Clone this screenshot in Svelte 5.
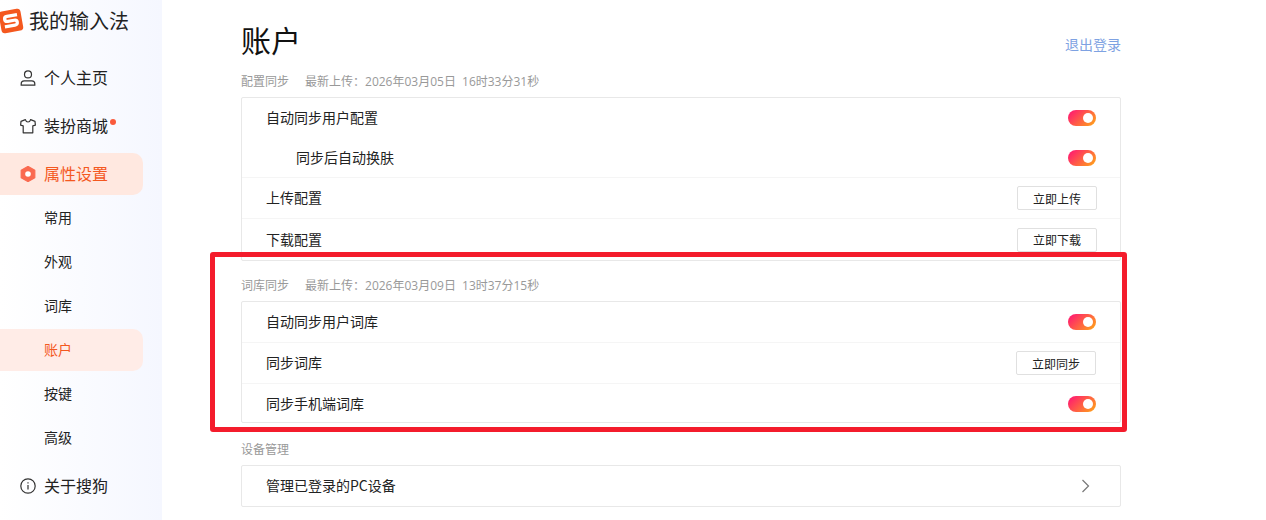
<script lang="ts">
const nav = [
  { label: '常用' },
  { label: '外观' },
  { label: '词库' },
  { label: '账户', active: true },
  { label: '按键' },
  { label: '高级' },
];
</script>

<div class="page">
  <aside class="sidebar">
    <div class="brand">
      <svg class="logo" width="26" height="26" viewBox="0 0 26 26">
        <g transform="rotate(-10 13 13)">
          <rect x="2" y="2" width="22" height="22" rx="3.500" fill="#f4581f" />
          <path d="M20 7.800H9.800c-1.800 0-2.800 1-2.800 2.500s1 2.500 2.800 2.500h6.400c1.800 0 2.800 1 2.800 2.400s-1 2.500-2.800 2.500H6" fill="none" stroke="#fff" stroke-width="3.200" />
        </g>
      </svg>
      <span>我的输入法</span>
    </div>

    <div class="item">
      <svg width="16" height="16" viewBox="0 0 16 16" fill="none" stroke="#333" stroke-width="1.200">
        <circle cx="8" cy="4.400" r="3.500" />
        <path d="M1.200 15.200v-1.400c0-1.800 1.300-3 3-3h7.600c1.700 0 3 1.200 3 3v1.400z" />
      </svg>
      <span>个人主页</span>
    </div>
    <div class="item">
      <svg width="16" height="16" viewBox="0 0 16 16" fill="none" stroke="#333" stroke-width="1.200" stroke-linejoin="round">
        <path d="M5.400 1.600 1 3.400.6 7.200l2.600.6v7h9.600v-7l2.600-.6-.4-3.800-4.400-1.800C10.200 3.200 9.200 4 8 4s-2.200-.8-2.600-2.400z" />
      </svg>
      <span>装扮商城</span>
      <i class="dot"></i>
    </div>
    <div class="item current">
      <svg width="16" height="16" viewBox="0 0 16 16">
        <path d="M8 .4 14.800 4.200v7.600L8 15.600 1.200 11.800V4.200z" fill="#fa6a50" stroke="#fa6a50" stroke-width="1.200" stroke-linejoin="round" />
        <circle cx="8" cy="8" r="2.800" fill="#fff" />
      </svg>
      <span>属性设置</span>
    </div>

    <nav class="subnav">
      {#each nav as entry}
        <div class="subitem" class:active={entry.active}>{entry.label}</div>
      {/each}
    </nav>

    <div class="item about">
      <svg width="16" height="16" viewBox="0 0 16 16" fill="none" stroke="#333" stroke-width="1.200">
        <circle cx="8" cy="8" r="7.200" />
        <path d="M8 7v4.500M8 4.200v1.300" />
      </svg>
      <span>关于搜狗</span>
    </div>
  </aside>

  <main class="content">
    <header class="head">
      <h1>账户</h1>
      <a class="logout" href="#logout">退出登录</a>
    </header>

    <div class="section-label">
      <span>配置同步</span><span>最新上传：2026年03月05日 16时33分31秒</span>
    </div>
    <section class="card config">
      <div class="row short"><span>自动同步用户配置</span><i class="toggle"></i></div>
      <div class="row short nested line"><span>同步后自动换肤</span><i class="toggle"></i></div>
      <div class="row line"><span>上传配置</span><button>立即上传</button></div>
      <div class="row"><span>下载配置</span><button>立即下载</button></div>
    </section>

    <div class="section-label second">
      <span>词库同步</span><span>最新上传：2026年03月09日 13时37分15秒</span>
    </div>
    <section class="card dict">
      <div class="row line"><span>自动同步用户词库</span><i class="toggle"></i></div>
      <div class="row line"><span>同步词库</span><button>立即同步</button></div>
      <div class="row short"><span>同步手机端词库</span><i class="toggle"></i></div>
    </section>

    <div class="section-label third"><span>设备管理</span></div>
    <section class="card">
      <div class="row short"><span>管理已登录的PC设备</span>
        <svg class="chevron" width="10" height="14" viewBox="0 0 10 14" fill="none" stroke="#777" stroke-width="1.200">
          <path d="M1.500 1 7.500 7l-6 6" />
        </svg>
      </div>
    </section>
  </main>

  <div class="highlight"></div>
</div>

<style>
  :global(body) {
    margin: 0;
    background: #fff;
  }

  .page {
    position: relative;
    display: flex;
    width: 1266px;
    height: 520px;
    overflow: hidden;
    font-family: 'Noto Sans CJK SC', 'Liberation Sans', sans-serif;
    color: #222;
  }

  .sidebar {
    flex: none;
    width: 162px;
    height: 520px;
    padding-right: 19px;
    box-sizing: border-box;
    background: linear-gradient(90deg, #ffffff 0%, #f5f7ff 100%);
  }

  .brand {
    display: flex;
    align-items: center;
    gap: 5px;
    height: 42px;
    margin-left: -1px;
    font-size: 20px;
  }

  .brand span {
    margin-top: -1px;
  }

  .logo {
    flex: none;
    margin-left: -1px;
  }

  .item {
    display: flex;
    align-items: center;
    gap: 8px;
    height: 42px;
    margin-top: 6px;
    padding-left: 20px;
    font-size: 16px;
    border-radius: 0 10px 10px 0;
  }

  .item span {
    margin-top: -2px;
  }

  .brand + .item {
    margin-top: 15px;
  }

  .item.current {
    color: #f4581f;
    background: #ffe8e0;
  }

  .about {
    margin-top: 6px;
  }

  .dot {
    width: 6px;
    height: 6px;
    margin: -8px 0 0 -6px;
    border-radius: 50%;
    background: #fa5a3c;
  }

  .subnav {
    display: flex;
    flex-direction: column;
    gap: 2px;
    margin-top: 2px;
  }

  .subitem {
    height: 42px;
    padding-left: 44px;
    line-height: 40px;
    font-size: 14px;
    border-radius: 0 10px 10px 0;
  }

  .subitem.active {
    color: #f4581f;
    background: #ffece7;
  }

  .content {
    flex: none;
    width: 880px;
    margin-left: 79px;
  }

  .head {
    display: flex;
    align-items: center;
    justify-content: space-between;
    height: 74px;
  }

  h1 {
    margin: 4px 0 0;
    font-size: 30px;
    font-weight: 400;
    line-height: 42px;
    color: #111;
  }

  .logout {
    margin-top: 14px;
    font-size: 14px;
    color: #7ea2e2;
    text-decoration: none;
  }

  .section-label {
    display: flex;
    gap: 16px;
    height: 23px;
    line-height: 16px;
    font-family: 'Open Sans', 'Noto Sans CJK SC', sans-serif;
    font-size: 12px;
    word-spacing: 3px;
    color: #999;
  }

  .section-label.second {
    margin-top: 17px;
  }

  .section-label.third {
    margin-top: 19px;
  }

  .card {
    border: 1px solid #e8e8e8;
    border-radius: 2px;
    background: #fff;
  }

  .dict {
    height: 120px;
  }

  .row {
    display: flex;
    align-items: center;
    justify-content: space-between;
    box-sizing: border-box;
    height: 41px;
    padding: 0 24px;
    font-size: 14px;
  }

  .row > span {
    margin-top: -2px;
  }

  .row.short {
    height: 40px;
  }

  .row.nested {
    padding-left: 54px;
  }

  .row.line {
    border-bottom: 1px solid #f5f5f5;
  }

  .toggle {
    position: relative;
    width: 28px;
    height: 16px;
    border-radius: 8px;
    background: linear-gradient(135deg, #ff1f6e 10%, #ff9a1f 90%);
  }

  .toggle::after {
    content: '';
    position: absolute;
    top: 3px;
    right: 3px;
    width: 10px;
    height: 10px;
    border-radius: 50%;
    background: #fff;
  }

  button {
    width: 80px;
    height: 24px;
    padding: 0;
    border: 1px solid #e0e0e0;
    border-radius: 2px;
    background: #fff;
    font: inherit;
    font-size: 12px;
    color: #222;
  }

  .config button {
    margin-right: -1px;
  }

  .chevron {
    margin-right: 5px;
  }

  .highlight {
    position: absolute;
    left: 210px;
    top: 252px;
    width: 907px;
    height: 170px;
    border: 5px solid #f41c2c;
    border-radius: 3px;
    pointer-events: none;
  }
</style>
